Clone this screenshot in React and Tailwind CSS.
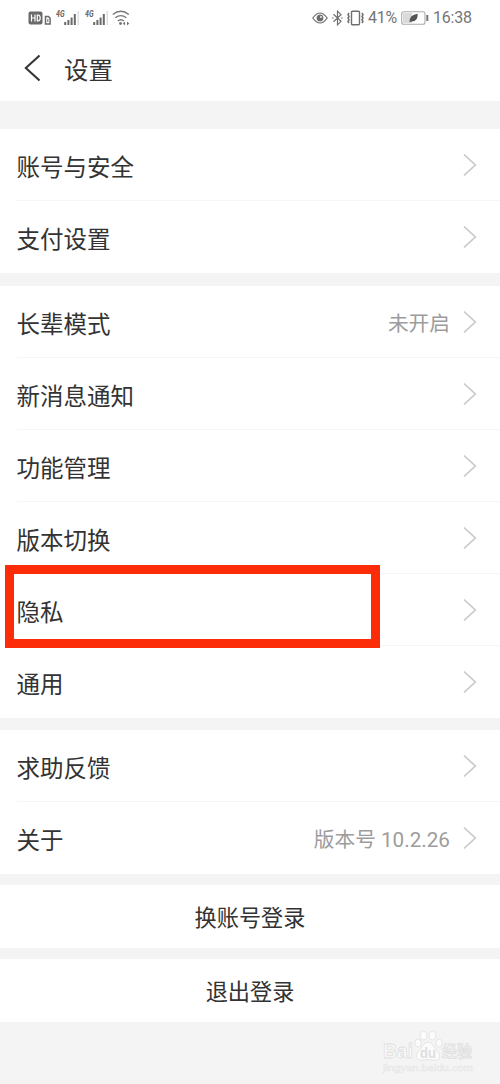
import React from 'react';

const groups = [
  {
    className: 'mt-7',
    items: [{ label: '账号与安全' }, { label: '支付设置' }],
  },
  {
    className: 'mt-[13px]',
    items: [
      { label: '长辈模式', value: '未开启' },
      { label: '新消息通知' },
      { label: '功能管理' },
      { label: '版本切换' },
      { label: '隐私', highlight: true },
      { label: '通用' },
    ],
  },
  {
    className: 'mt-[12px]',
    items: [{ label: '求助反馈' }, { label: '关于', value: '版本号 10.2.26' }],
  },
];

const Signal = () => (
  <svg width="24" height="18" viewBox="0 0 24 18" className="shrink-0">
    <text x="0" y="8" fontSize="9" fontWeight="700" fontStyle="italic" fill="#666" fontFamily="Roboto, sans-serif" textLength="8.5" lengthAdjust="spacingAndGlyphs">4G</text>
    <path d="M9.2 13v3M12.4 11v5M15.6 8.5v7.5M18.8 5v11" stroke="#6a6a6a" strokeWidth="2" />
    <path d="M22.3 2v14" stroke="#ddd" strokeWidth="1.5" />
  </svg>
);

const StatusBar = () => (
  <div className="flex h-[35px] items-center pl-7 pr-[28px] text-[#757575]">
    <svg width="24" height="16" viewBox="0 0 24 16" className="shrink-0">
      <rect x="0.5" y="1.5" width="14" height="13" rx="2" fill="#6a6a6a" />
      <path d="M3.5 4.5v7M7 4.5v7M3.5 8H7M9.3 5v6h.7q2.2-.3 2.2-3T10 5z" fill="none" stroke="#fff" strokeWidth="1.2" />
      <path d="M17.5 6.5h3l1.6 1.7V14h-4.6z" fill="none" stroke="#6a6a6a" strokeWidth="1.5" />
      <path d="M19.8 9v3" stroke="#888" strokeWidth="1.2" />
    </svg>
    <div className="ml-[4px] flex gap-[5px]">
      <Signal />
      <Signal />
    </div>
    <svg width="18" height="18" viewBox="0 0 18 18" fill="none" stroke="#777" strokeWidth="1.4" className="ml-[3px] shrink-0">
      <path d="M.8 5.5q8-6.5 16 0M3.3 8.8q5.5-4.4 11 0M5.7 12q3.1-2.7 6.2 0" />
      <circle cx="8.5" cy="14.5" r="1.4" fill="#777" stroke="none" />
      <path d="M10.8 14.5l2.3-2v4zM17.3 14.5l-2.3-2v4z" fill="#777" stroke="none" />
    </svg>
    <svg width="16" height="14" viewBox="0 0 16 14" fill="none" stroke="#6f6f6f" strokeWidth="1.2" className="ml-auto shrink-0">
      <path d="M.8 7Q8-3 15.2 7Q8 17 .8 7z" />
      <circle cx="8" cy="7" r="2.8" fill="#6a6a6a" />
      <circle cx="9" cy="6" r=".9" fill="#fff" stroke="none" />
    </svg>
    <svg width="12" height="16" viewBox="0 0 12 16" fill="none" stroke="#6f6f6f" strokeWidth="1.2" className="ml-[4px] shrink-0">
      <path d="M1.5 4.3l7.5 7L5.5 14.8V1.2L9 4.7l-7.5 7" />
      <path d="M0 8h1.6M9 8h1.6" />
    </svg>
    <svg width="18" height="16" viewBox="0 0 18 16" fill="none" stroke="#6f6f6f" className="ml-[3px] mr-[3px] shrink-0">
      <rect x="4.5" y="1.2" width="8" height="13.6" rx="1" strokeWidth="1.4" />
      <path d="M2 3L1 4.7l1 1.7-1 1.7 1 1.7-1 1.7 1 1.5M15 3l1 1.7-1 1.7 1 1.7-1 1.7 1 1.7-1 1.5" strokeWidth="1.5" />
    </svg>
    <span className="w-[30px] text-[16px] leading-none whitespace-nowrap tracking-[-0.2px]">41%</span>
    <svg width="28" height="14" viewBox="0 0 28 14" className="ml-[3px] shrink-0">
      <rect x=".7" y=".7" width="23.3" height="12.6" rx="2" fill="#fff" stroke="#aaa" strokeWidth="1.1" />
      <path d="M2 2h9v10H2z" fill="#dadada" />
      <path d="M8.5 11.2q-.2-7.4 8.2-8.4Q17 10.8 10.5 10.4z" fill="#555" />
      <path d="M26.3 4v6" stroke="#777" strokeWidth="2" />
    </svg>
    <span className="ml-[4px] w-[39px] text-[16px] leading-none whitespace-nowrap tracking-[-0.2px]">16:38</span>
  </div>
);

const Chevron = () => (
  <svg width="14" height="24" viewBox="0 0 14 24" fill="none" stroke="#c9c9c9" strokeWidth="1.7" className="shrink-0">
    <path d="M1 1.5L12.3 12 1 22.5" />
  </svg>
);

const Row = ({ label, value, highlight, last }) => (
  <div className="relative flex h-[72px] items-center pl-[16.5px] pr-[23px]">
    <span className="pt-[5px] text-[23.5px] leading-8 text-[#333]">{label}</span>
    {value && (
      <span className="ml-auto mr-[13px] pt-[3px] text-[20.7px] leading-8 text-[#9c9c9c]">{value}</span>
    )}
    <div className={value ? '' : 'ml-auto'}>
      <Chevron />
    </div>
    {!last && <div className="absolute right-0 bottom-0 left-[17px] h-px bg-[#f5f5f5]" />}
    {highlight && (
      <div className="absolute top-[-9px] left-[5px] z-10 h-[83px] w-[375px] border-[9px] border-[#fc2b08]" />
    )}
  </div>
);

const Watermark = () => (
  <svg width="96" height="48" viewBox="0 0 96 48" className="absolute top-[1028px] left-[382px]" fontFamily="'Liberation Sans', 'Noto Sans CJK SC', sans-serif">
    <g fill="#fbfbfb" stroke="#dfdfdf" strokeWidth=".8">
      <ellipse cx="36" cy="15" rx="3.2" ry="4" />
      <ellipse cx="41.5" cy="7.5" rx="3.4" ry="4.4" />
      <ellipse cx="50.5" cy="7.5" rx="3.4" ry="4.4" />
      <ellipse cx="57" cy="15" rx="3.2" ry="4" />
      <path d="M46 14q3.5 0 5.5 4t5 6.5q3.5 5.5-2 7.500-4 .5-8.500-.5-4.500 1-8.500.5-5.500-2-2-7.500 3-2.500 5-6.500t5.500-4z" />
      <text x="1" y="30" fontSize="20" fontWeight="700" textLength="30" lengthAdjust="spacingAndGlyphs">Bai</text>
      <text x="60" y="29" fontSize="16" fontWeight="500" textLength="30" lengthAdjust="spacingAndGlyphs">经验</text>
    </g>
    <text x="38" y="30" fontSize="15" fontWeight="700" fill="#dedede" textLength="16" lengthAdjust="spacingAndGlyphs">du</text>
    <text x="1" y="43" fontSize="9" fill="#f9f9f9" stroke="#e6e6e6" strokeWidth=".5" textLength="90" lengthAdjust="spacingAndGlyphs">jingyan.baidu.com</text>
  </svg>
);

const App = () => {
  return (
    <div className="relative h-[1084px] w-[500px] overflow-hidden bg-[#f4f4f4] font-[Roboto,'Noto_Sans_CJK_SC',sans-serif]">
      <div className="h-[101px] bg-white">
        <StatusBar />
        <div className="flex h-[66px] items-center pl-[24px]">
          <svg width="16" height="28" viewBox="0 0 16 28" fill="none" stroke="#333" strokeWidth="2">
            <path d="M15.5 1.5L1.8 14l13.7 12.5" />
          </svg>
          <h1 className="ml-[24px] pt-[5px] text-[24.4px] leading-8 text-[#333]">设置</h1>
        </div>
      </div>

      {groups.map((group, i) => (
        <div key={i} className={`bg-white ${group.className}`}>
          {group.items.map((item, j) => (
            <Row key={item.label} {...item} last={j === group.items.length - 1} />
          ))}
        </div>
      ))}

      <button className="mt-[11px] flex h-[63px] w-full items-center justify-center bg-white pt-[4px] text-[22.2px] text-[#333]">
        换账号登录
      </button>
      <button className="mt-[11px] flex h-[63px] w-full items-center justify-center bg-white pt-[4px] text-[22.2px] text-[#333]">
        退出登录
      </button>

      <Watermark />
    </div>
  );
};

export default App;
